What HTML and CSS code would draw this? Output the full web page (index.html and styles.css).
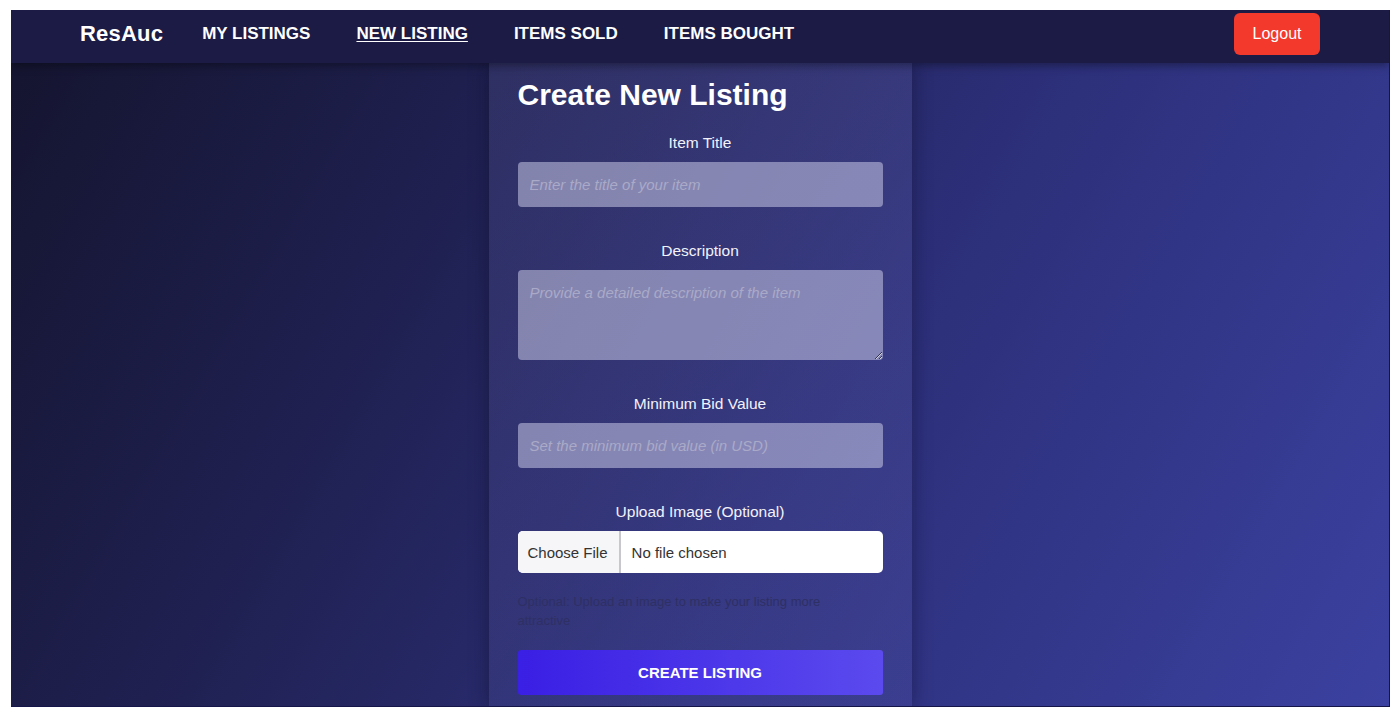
FILE: index.html
```html
<!DOCTYPE html>
<html lang="en">
<head>
<meta charset="utf-8">
<title>ResAuc - New Listing</title>
<link rel="stylesheet" href="styles.css">
</head>
<body>
<div class="frame">
  <header class="navbar">
    <div class="brand">ResAuc</div>
    <nav class="links">
      <a class="link">MY LISTINGS</a>
      <a class="link active">NEW LISTING</a>
      <a class="link">ITEMS SOLD</a>
      <a class="link">ITEMS BOUGHT</a>
    </nav>
    <button class="logout">Logout</button>
  </header>
  <main class="content">
    <form class="card">
      <h2 class="title">Create New Listing</h2>
      <div class="field">
        <label class="label">Item Title</label>
        <input class="input" type="text" placeholder="Enter the title of your item">
      </div>
      <div class="field">
        <label class="label">Description</label>
        <textarea class="input textarea" placeholder="Provide a detailed description of the item"></textarea>
      </div>
      <div class="field">
        <label class="label">Minimum Bid Value</label>
        <input class="input" type="text" placeholder="Set the minimum bid value (in USD)">
      </div>
      <div class="field">
        <label class="label">Upload Image (Optional)</label>
        <div class="file">
          <span class="file-btn">Choose File</span>
          <span class="file-name">No file chosen</span>
        </div>
      </div>
      <p class="help">Optional: Upload an image to make your listing more attractive</p>
      <button type="button" class="submit">CREATE LISTING</button>
    </form>
  </main>
</div>
</body>
</html>
```

FILE: styles.css
```css
* { box-sizing: border-box; }
html, body { margin: 0; height: 100%; }
body {
  background: #ffffff;
  padding: 10px 10px 9px 11px;
  font-family: "Liberation Sans", Arial, sans-serif;
}
.frame {
  height: 697px;
  display: flex;
  flex-direction: column;
  overflow: hidden;
  background: linear-gradient(120deg, #14142e 0%, #1f2050 30%, #2c2f78 60%, #3b41a0 100%);
  border-right: 1px solid #15154a;
  border-bottom: 1px solid #15154a;
}
.navbar {
  height: 53px;
  flex: none;
  display: flex;
  align-items: center;
  padding: 0 69px 6px;
  background: #1b1b45;
  box-shadow: 0 3px 8px rgba(0,0,0,0.35);
  position: relative;
  z-index: 2;
  color: #fff;
}
.brand {
  font-size: 22px;
  font-weight: 700;
  margin-right: 39px;
  margin-top: 1px;
  letter-spacing: 0.2px;
}
.links {
  display: flex;
  gap: 46px;
  flex: 1;
}
.link {
  font-size: 17px;
  font-weight: 700;
  color: #fff;
}
.link.active { text-decoration: underline; text-underline-offset: 2px; }
.logout {
  width: 86px;
  height: 42px;
  margin-top: 0;
  border: none;
  border-radius: 6px;
  background: #f2392c;
  color: #fff;
  font-family: "Liberation Sans", Arial, sans-serif;
  font-size: 16px;
}
.content {
  flex: 1;
  display: flex;
  justify-content: center;
}
.card {
  width: 423px;
  padding: 14px 29px 12px;
  background: linear-gradient(180deg, rgba(120,120,190,0.18), rgba(110,110,200,0.16));
  box-shadow: 0 0 18px rgba(10,10,40,0.45);
  display: flex;
  flex-direction: column;
}
.title {
  margin: 0;
  color: #fff;
  font-size: 30px;
  font-weight: 700;
  line-height: 36px;
}
.field {
  display: flex;
  flex-direction: column;
  align-items: stretch;
  margin-top: 21px;
}
.field + .field { margin-top: 35px; }
.label {
  text-align: center;
  color: #f2f2fa;
  font-size: 15.5px;
  line-height: 18px;
  margin-bottom: 10px;
}
.input {
  height: 45px;
  border: none;
  border-radius: 4px;
  background: rgba(200,200,230,0.55);
  padding: 0 12px;
  font-family: "Liberation Sans", Arial, sans-serif;
  font-size: 15px;
  color: #222;
}
.input::placeholder { color: #aaaac8; font-style: italic; }
.textarea { height: 90px; padding-top: 14px; resize: vertical; }
.file {
  height: 42px;
  display: flex;
  align-items: center;
  background: #fff;
  border-radius: 5px;
  font-size: 15px;
  color: #333;
}
.file-btn {
  height: 100%;
  display: flex;
  align-items: center;
  padding: 0 11px 0 10px;
  background: #f6f6f8;
  border-right: 2px solid #c8c8cc;
  border-radius: 5px 0 0 5px;
}
.file-name { padding-left: 11px; }
.help {
  margin: 19px 0 0;
  color: #2e3064;
  font-size: 13px;
  line-height: 19px;
  padding-right: 50px;
}
.submit {
  margin-top: 20px;
  height: 45px;
  border: none;
  border-radius: 3px;
  background: linear-gradient(90deg, #3a1fe4, #5b4aee);
  color: #fff;
  font-family: "Liberation Sans", Arial, sans-serif;
  font-size: 15px;
  font-weight: 700;
}
```
